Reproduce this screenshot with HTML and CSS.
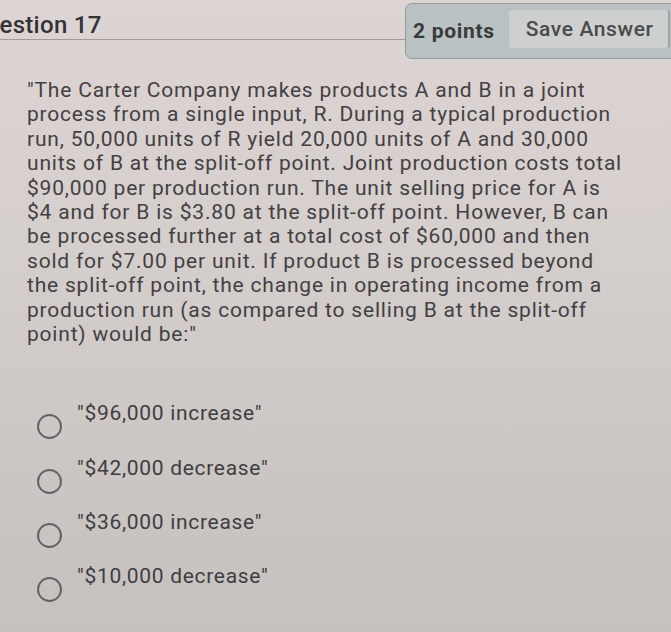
FILE: index.html
```html
<!DOCTYPE html>
<html lang="en">
<head>
<meta charset="utf-8">
<title>Question 17</title>
<link rel="stylesheet" href="styles.css">
</head>
<body>
<div class="page">
  <header class="q-header">
    <div class="q-title-wrap">
      <h2 class="q-title">Question 17</h2>
    </div>
    <div class="q-points-box">
      <span class="q-points">2 points</span>
      <button class="q-save" type="button">Save Answer</button>
    </div>
  </header>

  <p class="q-text">"The Carter Company makes products A and B in a joint<br>process from a single input, R. During a typical production<br>run, 50,000 units of R yield 20,000 units of A and 30,000<br>units of B at the split-off point. Joint production costs total<br>$90,000 per production run. The unit selling price for A is<br>$4 and for B is $3.80 at the split-off point. However, B can<br>be processed further at a total cost of $60,000 and then<br>sold for $7.00 per unit. If product B is processed beyond<br>the split-off point, the change in operating income from a<br>production run (as compared to selling B at the split-off<br>point) would be:"</p>

  <ul class="q-options">
    <li class="q-option"><span class="q-radio"></span><span class="q-label">"$96,000 increase"</span></li>
    <li class="q-option"><span class="q-radio"></span><span class="q-label">"$42,000 decrease"</span></li>
    <li class="q-option"><span class="q-radio"></span><span class="q-label">"$36,000 increase"</span></li>
    <li class="q-option"><span class="q-radio"></span><span class="q-label">"$10,000 decrease"</span></li>
  </ul>
</div>
</body>
</html>
```
FILE: styles.css
```css
html, body {
  margin: 0;
  padding: 0;
}
body {
  width: 671px;
  height: 632px;
  overflow: hidden;
  font-family: Roboto, "Liberation Sans", sans-serif;
  color: #433f42;
  background: linear-gradient(180deg, #ddd5d3 0%, #d4cecc 40%, #c5c1be 100%);
}
.page {
  display: flex;
  flex-direction: column;
}
.q-header {
  display: flex;
  align-items: flex-start;
  height: 60px;
}
.q-title-wrap {
  flex: 1;
  height: 39px;
  border-bottom: 1px solid #a29b9a;
  overflow: hidden;
}
.q-title {
  margin: 0 0 0 -31px;
  padding-top: 11px;
  font-size: 24px;
  line-height: 28px;
  font-weight: 500;
  letter-spacing: 0.3px;
  color: #353236;
  white-space: nowrap;
}
.q-points-box {
  margin-top: 3px;
  margin-right: -12px;
  width: 278px;
  height: 56px;
  box-sizing: border-box;
  display: flex;
  align-items: center;
  gap: 14px;
  padding-left: 7px;
  background: #b9c1c3;
  border: 1px solid #949c9e;
  border-radius: 7px;
}
.q-points {
  font-size: 21px;
  font-weight: 700;
  letter-spacing: 0.7px;
  color: #3a393b;
}
.q-save {
  margin-top: -4px;
  height: 38px;
  padding: 0 14px 0 17px;
  font-family: inherit;
  font-size: 21px;
  font-weight: 500;
  letter-spacing: 0.6px;
  color: #4b494c;
  background: #cdd0cf;
  border: 0;
  border-right: 2px solid #9ea4a5;
  border-radius: 3px;
}
.q-text {
  margin: 18px 0 0 27px;
  font-size: 21px;
  line-height: 24.4px;
  letter-spacing: 0.8px;
  white-space: nowrap;
}
.q-options {
  list-style: none;
  margin: 55px 0 0 0;
  padding: 0 0 0 37px;
  display: flex;
  flex-direction: column;
}
.q-option {
  display: flex;
  align-items: flex-start;
  gap: 15px;
  height: 54.3px;
}
.q-radio {
  flex: none;
  margin-top: 13px;
  width: 21px;
  height: 21px;
  border: 2px solid #676365;
  border-radius: 50%;
}
.q-label {
  font-size: 21px;
  line-height: 24px;
  letter-spacing: 0.7px;
  color: #403d40;
}
```
